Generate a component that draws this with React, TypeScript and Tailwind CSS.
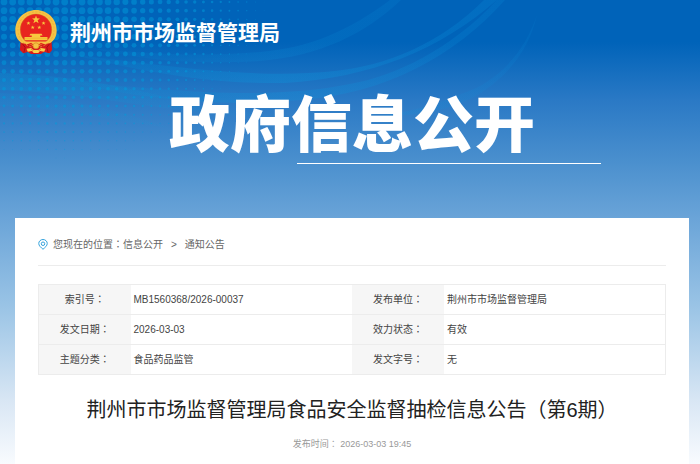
import React from "react";

interface InfoRow {
  label: string;
  value: string;
}

const infoRows: [InfoRow, InfoRow][] = [
  [
    { label: "索引号", value: "MB1560368/2026-00037" },
    { label: "发布单位", value: "荆州市市场监督管理局" },
  ],
  [
    { label: "发文日期", value: "2026-03-03" },
    { label: "效力状态", value: "有效" },
  ],
  [
    { label: "主题分类", value: "食品药品监管" },
    { label: "发文字号", value: "无" },
  ],
];

const DOT_STEP = 8.67;

// halftone dots, largest near the top left and shrinking outwards
const dots = Array.from({ length: 19 * 32 }, (_, i) => {
  const col = i % 32;
  const row = Math.floor(i / 32);
  const x = 4 + col * DOT_STEP;
  const y = 2 + row * DOT_STEP;
  const dx = (x - 60) / (x < 60 ? 260 : 220);
  const dy = y / 170;
  const falloff = 1 - Math.sqrt(dx * dx + dy * dy);
  return { x, y, r: Math.max(0, Math.min(3.4, 4.3 * falloff)) };
}).filter((dot) => dot.r > 0.3);

// full-width colon centred in its cell
const Colon: React.FC = () => <span className="font-['Noto_Sans_CJK_TC',sans-serif] leading-none">：</span>;

const HeaderBackdrop: React.FC = () => (
  <svg className="absolute left-0 top-0 pointer-events-none" width="700" height="218" viewBox="0 0 700 218" aria-hidden="true">
    <defs>
      <linearGradient id="swoosh" x1="0" y1="0" x2="560" y2="0" gradientUnits="userSpaceOnUse">
        <stop offset="0" stopColor="#00a0e0" stopOpacity="0.05" />
        <stop offset="0.25" stopColor="#00a0e0" stopOpacity="0.15" />
        <stop offset="0.5" stopColor="#0a9be0" stopOpacity="0.28" />
        <stop offset="1" stopColor="#0a8fdc" stopOpacity="0.2" />
      </linearGradient>
      <linearGradient id="haze" x1="0" y1="0" x2="300" y2="0" gradientUnits="userSpaceOnUse">
        <stop offset="0" stopColor="#00a5dc" stopOpacity="0.2" />
        <stop offset="1" stopColor="#00a5dc" stopOpacity="0" />
      </linearGradient>
    </defs>
    <path d="M0 73 C70 76 120 84 200 106 L290 118 C190 118 90 92 0 90 Z" fill="url(#haze)" />
    <path d="M0 93 C60 96 110 108 170 128 C110 120 50 106 0 106 Z" fill="url(#haze)" opacity="0.5" />
    <g fill="#009bdc" fillOpacity="0.5">
      {dots.map((dot) => (
        <circle key={`${dot.x}-${dot.y}`} cx={dot.x} cy={dot.y} r={dot.r} />
      ))}
    </g>
    <g fill="url(#swoosh)">
      <path d="M390 0 C350 30 310 48 260 52 C200 57 150 54 90 48 C150 62 200 64 260 61 C320 56 365 34 401 0 Z" opacity="0.55" />
      <path d="M484 0 C440 44 385 66 335 71 C260 79 180 68 70 54 C160 76 220 84 285 83 C370 78 440 50 497 0 Z" />
      <path d="M497 0 C450 50 395 76 350 84 C270 100 180 92 60 80 C160 104 240 106 300 100 C385 94 455 56 505 0 Z" opacity="0.85" />
      <path d="M537 15 C524 54 496 84 458 95 C438 104 410 112 380 116 C430 116 466 105 488 88 C515 68 530 44 537 15 Z" opacity="0.6" />
    </g>
  </svg>
);

const Emblem: React.FC = () => (
  <svg className="h-[44px] w-[42px] shrink-0" viewBox="0 0 126 134" role="img" aria-label="国徽">
    <path d="M16 92 L110 92 L112 122 L104 132 L88 128 L78 134 L48 134 L38 128 L24 132 L14 122 Z" fill="#d7191c" />
    <path d="M18 98 L30 114 L26 130 M108 98 L96 114 L100 130" fill="none" stroke="#a80f12" strokeWidth="3" />
    <path d="M63 0 C98 0 126 27 126 62 C126 80 119 93 106 101 L84 103 L63 115 L42 103 L20 101 C7 93 0 80 0 62 C0 27 28 0 63 0 Z" fill="#f6c344" />
    <ellipse cx="63" cy="60" rx="55" ry="54" fill="none" stroke="#e8ad35" strokeWidth="2" strokeDasharray="7 4" />
    <ellipse cx="63" cy="60" rx="48" ry="48" fill="#e8251f" stroke="#c88a1c" strokeWidth="1" />
    <g fill="#f8c93e">
      <path d="M63 17 L66 25 L75 26 L68 31 L71 40 L63 35 L55 40 L58 31 L51 26 L60 25 Z" />
      <path id="small-star" d="M40 34 L41.500 38 L46 38 L42.500 41 L44 45 L40 42.500 L36 45 L37.500 41 L34 38 L38.500 38 Z" />
      <use href="#small-star" x="46" />
      <use href="#small-star" x="13" y="13" />
      <use href="#small-star" x="33" y="13" />
      <path d="M46 72 H80 L83 78 H76 V82 H98 V92 H28 V82 H50 V78 H43 Z" />
    </g>
    <path d="M28 86 H98" stroke="#e59a24" strokeWidth="1" />
    <path d="M24 96 H102 L92 105 L78 100 L63 111 L48 100 L34 105 Z" fill="#f6c344" />
    <circle cx="63" cy="109" r="9" fill="#f6c344" stroke="#d78b20" strokeWidth="2" />
    <path d="M34 118 L48 116 L56 122 H70 L78 116 L92 118 L88 127 L75 125 L70 131 H56 L51 125 L38 127 Z" fill="#f9cf4b" />
    <path d="M49 119 L54 124 M77 119 L72 124" stroke="#cf2a1c" strokeWidth="2" />
  </svg>
);

const PinIcon: React.FC = () => (
  <svg className="h-[11px] w-[10px] shrink-0" viewBox="0 0 20 22" fill="none" stroke="#36a3dc" strokeWidth="2" aria-hidden="true">
    <path d="M10 20.500 C6 17 1.500 13.500 1.500 9 A8.500 8 0 0 1 18.500 9 C18.500 13.500 14 17 10 20.500 Z" />
    <circle cx="10" cy="9.500" r="3.500" />
  </svg>
);

const App: React.FC = () => {
  return (
    <div className="relative min-h-screen bg-[linear-gradient(180deg,#0063b9_0px,#0063b9_42px,#2a79c5_100px,#4b90ce_163px,#6aa4d8_218px,#9cc5e6_310px,#d8e6f4_400px,#f8fbfe_464px)] font-['Liberation_Sans','Noto_Sans_CJK_SC',sans-serif]">
      <HeaderBackdrop />

      <div className="relative">
        <header className="flex items-center gap-[13px] pl-[15px] pt-[10px]">
          <Emblem />
          <div className="pt-[2px] text-[21px] leading-6 font-bold text-white">荆州市市场监督管理局</div>
        </header>

        <div className="mx-auto mt-[36px] mb-[54px] w-fit pl-1">
          <h1 className="text-[61px] leading-[72px] font-black text-white">政府信息公开</h1>
          <hr className="mt-px ml-[35%] -mr-[18%] border-white" />
        </div>

        <main className="ml-[15px] mr-[11px] bg-white px-[23px] pb-3">
          <nav className="flex h-12 items-center border-b border-[#ececec] pt-[6px] text-[10px] leading-4 text-[#666666]">
            <PinIcon />
            <span className="ml-[5px]">
              您现在的位置
              <Colon />
            </span>
            <a href="#info">信息公开</a>
            <span className="mx-2">&gt;</span>
            <a href="#notice">通知公告</a>
          </nav>

          <table className="mt-[18px] w-full table-fixed border-collapse border border-[#ececec] text-[10px] leading-4 text-[#444444]">
            <colgroup>
              <col className="w-[92px]" />
              <col />
              <col className="w-[92px]" />
              <col />
            </colgroup>
            <tbody>
              {infoRows.map((row) => (
                <tr key={row[0].label} className="border-b border-[#ececec]">
                  {row.map((item) => (
                    <React.Fragment key={item.label}>
                      <th scope="row" className="bg-[#f6f6f6] pt-[7px] pb-[6px] text-center font-normal">
                        {item.label}
                        <Colon />
                      </th>
                      <td className="pt-[7px] pb-[6px] pl-[3px]">{item.value}</td>
                    </React.Fragment>
                  ))}
                </tr>
              ))}
            </tbody>
          </table>

          <h2 className="mt-[21px] text-center text-[20px] leading-7 text-[#222222]">
            荆州市市场监督管理局食品安全监督抽检信息公告（第6期）
          </h2>
          <p className="mt-3 text-center text-[9px] leading-4 text-[#999999]">
            发布时间
            <Colon /> 2026-03-03 19:45
          </p>
        </main>
      </div>
    </div>
  );
};

export default App;
